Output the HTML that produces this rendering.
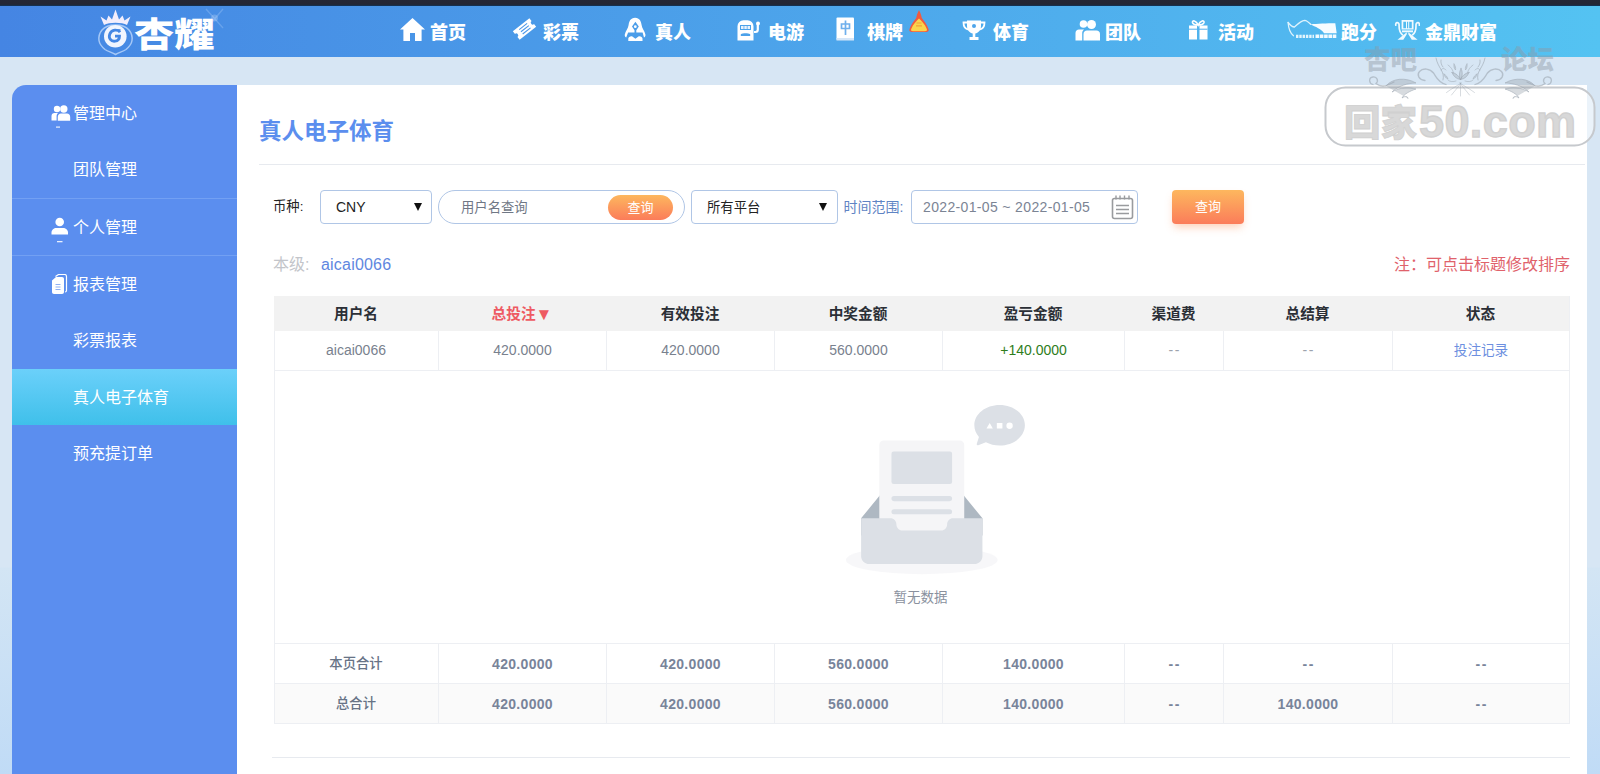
<!DOCTYPE html>
<html lang="zh-CN">
<head>
<meta charset="utf-8">
<title>真人电子体育</title>
<style>
*{box-sizing:border-box;margin:0;padding:0}
html,body{width:1600px;height:774px;overflow:hidden}
body{position:relative;background:linear-gradient(180deg,#d7e6f4 0,#d7e6f4 567px,#d3e5f4 568px,#c0dbf6 774px);font-family:"Liberation Sans","Noto Sans CJK SC",sans-serif;color:#333;font-size:14px}
.abs{position:absolute}
#topbar{left:0;top:0;width:1600px;height:6px;background:linear-gradient(180deg,#242736 0,#242634 4px,#1c2a3c 5px,#12355f 6px);z-index:5}
#header{left:0;top:5px;width:1600px;height:52px;overflow:hidden;background:linear-gradient(90deg,#4585e3 0%,#54c3f2 100%)}
.nav{position:absolute;top:2px;height:52px;line-height:52px;color:#fff;font-weight:900;font-size:18px;white-space:nowrap;letter-spacing:0}
.nav svg{position:absolute;top:0;left:0}
#logo{position:absolute;left:134px;top:10.500px;font-size:36px;line-height:40px;font-weight:900;color:#fff;letter-spacing:0;transform-origin:0 0;transform:scale(1.12,0.960)}
#side{left:12px;top:85px;width:225px;height:689px;background:#5b8eef;border-top-left-radius:14px;overflow:hidden}
.si{position:absolute;left:0;width:225px;height:56px;line-height:58px;color:#fff;font-size:16px;padding-left:61px;white-space:nowrap}
.si.act{background:linear-gradient(180deg,#6bd0fa 0%,#3fc0ea 100%)}
.sep{position:absolute;left:0;width:225px;height:1px;background:#72a0f3}
#main{left:237px;top:85px;width:1350px;height:689px;background:#fff}
#title{left:259px;top:115px;font-size:22.500px;line-height:34px;font-weight:700;color:#5b8eee;white-space:nowrap}
.hr{position:absolute;height:1px;background:#e7eaef}
.lbl{position:absolute;font-size:13.330px;line-height:20px;white-space:nowrap}
.box{position:absolute;border:1px solid #b0c6e6;background:#fff;border-radius:4px}
.btn{position:absolute;color:#fff;text-align:center;background:linear-gradient(180deg,#fdb75e 0%,#fb7c5a 100%);font-size:13px;white-space:nowrap}
.tri{width:0;height:0;border-left:4px solid transparent;border-right:4px solid transparent;border-top:8px solid #111}
#tbl{left:274px;top:296px;width:1296px;border:1px solid #e6e8ee}
.row{position:absolute;left:274px;width:1296px}
.c{position:absolute;top:0;height:100%;text-align:center;white-space:nowrap}
#tablewrap{left:274px;top:296px;width:1296px;height:428px;border-left:1px solid #edeff3;border-right:1px solid #edeff3}
.tr{position:absolute;left:-1px;width:1295px}
.th{background:#f2f2f2;font-weight:700;color:#2b2f36;font-size:14.670px}
.td{color:#79818e;box-shadow:inset 1px 0 0 #edeff3;font-size:14px;border-bottom:1px solid #edeff3}
.td .bd{border-left:1px solid #edeff3}
.td .bd:first-child{border-left:0}
.ft{color:#78849a;font-weight:700;box-shadow:inset 1px 0 0 #edeff3;font-size:14px;letter-spacing:0.300px;border-top:1px solid #edeff3}
.ft.alt{background:#fafafa;border-bottom:1px solid #edeff3}
.ft .bd{border-left:1px solid #edeff3}
.ft .bd:first-child{border-left:0}
.dd{letter-spacing:1.500px;margin-left:1.500px}
.td .dd{color:#9da3ad}
</style>
</head>
<body>
<div id="topbar" class="abs"></div>
<div id="header" class="abs">
  <svg class="abs" style="left:96px;top:3px" width="40" height="48" viewBox="0 0 40 48">
    <path d="M8 17 L4.500 8.500 L10.500 12.500 L12.500 7.500 L16 11.500 L19.500 1.500 L23 11.500 L26.500 7.500 L28.500 12.500 L34.500 8.500 L31 17 C26 14 13 14 8 17 Z" fill="#f3eefc"/>
    <path d="M19.500 17 C26 17 30.500 19 33 22 C35.500 25 36.500 28.500 36 32.500 C35.500 36 33 39 30 41.500 C27 43.500 23 44.500 19.500 46.500 C16 44.500 12 43.500 9 41.500 C6 39 3.500 36 3 32.500 C2.500 28.500 3.500 25 6 22 C8.500 19 13 17 19.500 17 Z" fill="none" stroke="#a5c8f7" stroke-width="1.500"/>
    <g transform="translate(0 -1.300)"><circle cx="19.300" cy="29.500" r="11.300" fill="#f1f5fe"/>
    <path d="M24 25.500 C22 22.500 15.500 22.500 13.700 27.500 C12.300 31.500 15 35 19 34.500 C22 34 23.500 32 23.500 29.500 H19" fill="none" stroke="#4587e4" stroke-width="2.800"/>
    <path d="M17 23.300 H24.500" stroke="#4587e4" stroke-width="1.600"/></g>
  </svg>
  <svg class="abs" style="left:200px;top:-2px" width="30" height="30" viewBox="0 0 30 30"><g stroke="#bcd8fa" stroke-opacity="0.280" stroke-width="1.400"><path d="M6 6 L23 25M23 6 L7 25"/></g><circle cx="14.500" cy="15" r="3.500" fill="#dcecff" fill-opacity="0.250"/></svg>

  <!-- nav icons : coordinates relative to header (top = y-5) -->
  <svg class="abs" style="left:400px;top:13px" width="25" height="23" viewBox="0 0 25 23"><path d="M12.5 0 L25 11.5 H21.6 V23 H15 V15 H10 V23 H3.4 V11.5 H0 Z" fill="#fff"/></svg>
  <svg class="abs" style="left:512px;top:12px" width="25" height="24" viewBox="0 0 25 24"><g transform="rotate(-38 12.5 12)"><path d="M2 6.5 H23 V10 A2 2 0 0 0 23 14 V17.5 H2 V14 A2 2 0 0 0 2 10 Z" fill="#fff"/><path d="M8 9.2H18M8 12H18M8 14.8H18" stroke="#4b97e8" stroke-width="1.1"/></g></svg>
  <svg class="abs" style="left:624px;top:12px" width="22" height="25" viewBox="0 0 22 25"><path d="M11.100 0.700 C6.500 0.700 5 4.500 4.600 8 C4.200 11.500 1.500 14 0.800 17.500 C0.600 19 1 20 2.200 20.400 L4.100 15.600 H18.600 L20 20.400 C21.200 20 21.600 19 21.400 17.500 C20.700 14 18 11.500 17.600 8 C17.200 4.500 15.700 0.700 11.100 0.700 Z M11.400 4.700 L14.800 9.500 L12.300 13.300 V15.600 H10.500 V13.300 L8 9.500 Z" fill="#fff" fill-rule="evenodd"/><circle cx="11.300" cy="9.700" r="1.400" fill="#fff"/><path d="M4.300 24 V21.500 C4.300 20 6 19 8 19.200 L11.400 21.700 L14.800 19.200 C16.800 19 18.500 20 18.500 21.500 V24 Z" fill="#fff"/></svg>
  <svg class="abs" style="left:737px;top:15px" width="24" height="21" viewBox="0 0 24 21"><path d="M6.500 0.300 H10.500 A6 6 0 0 1 16.500 6.300 V20.500 H0.500 V6.300 A6 6 0 0 1 6.500 0.300 Z M3 5 V10 H14 V5 Z M3.800 14.300 C6 13 11 13 13.200 14.300 V16 H3.800 Z" fill="#fff" fill-rule="evenodd"/><path d="M4 6H6.600V9H4ZM7.300 6H9.800V9H7.300ZM10.500 6H13V9H10.500Z" fill="#eaf3fd"/><path d="M17 12 H18.500 C20 12 20.800 11 20.800 9.500 V4" stroke="#fff" stroke-width="2.200" fill="none"/><circle cx="21" cy="3.500" r="2" fill="#fff"/></svg>
  <svg class="abs" style="left:836px;top:12px" width="19" height="24" viewBox="0 0 19 24"><rect x="0.5" y="0.5" width="17.500" height="22.500" rx="1" fill="#fff"/><rect x="0.5" y="21" width="17.500" height="2.500" fill="#d5e6f8"/><path d="M9.500 3.500V18M5.500 7H13.500V11.500H5.500Z" stroke="#6fb0ec" stroke-width="1.700" fill="none"/></svg>
  <svg class="abs" style="left:908px;top:4px" width="22" height="24" viewBox="0 0 22 24"><path d="M11 1 C12.300 3.500 13.200 6 13.800 9 C15.800 11.500 19 15.500 20.500 20 C21.200 22.200 20 23 18 23 H4 C2 23 0.800 22.200 1.500 20 C3 15.500 6.200 11.500 8.200 9 C8.800 6 9.700 3.500 11 1 Z" fill="#f25a3e"/><path d="M11 9.500 C13 11.500 17 15 18.800 20 C19.400 21.600 18.500 22.200 17 22.200 H5 C3.500 22.200 2.600 21.600 3.200 20 C5 15 9 11.500 11 9.500 Z" fill="#fbd44c"/><path d="M8.500 14h5M8 16.800h6" stroke="#f4a13a" stroke-width="1.200"/></svg>
  <svg class="abs" style="left:962px;top:15px" width="24" height="21" viewBox="0 0 24 21"><path d="M5 0.500 H19 V6 C19 10.500 16 13 13.300 13.600 V17 H16.500 V20 H7.500 V17 H10.700 V13.600 C8 13 5 10.500 5 6 Z" fill="#fff"/><path d="M5.500 2.500 H1.500 C1.500 6.500 3 9 6.500 9.500 M18.500 2.500 H22.500 C22.500 6.500 21 9 17.500 9.500" stroke="#fff" stroke-width="1.800" fill="none"/><circle cx="12" cy="6" r="2" fill="#4fa5ea"/></svg>
  <svg class="abs" style="left:1075px;top:15px" width="26" height="21" viewBox="0 0 26 21"><circle cx="8.500" cy="4" r="3.800" fill="#fff"/><path d="M0.500 20.500 V13 C0.500 11 2 9.500 4 9.500 H9 C8 10.500 7.200 11.500 7.200 13 V20.500 Z" fill="#fff"/><circle cx="16.500" cy="4.500" r="4.500" fill="#fff"/><path d="M8.500 20.500 V14 C8.500 11.800 10 10.500 12 10.500 H21.500 C23.500 10.500 25 11.800 25 14 V20.500 Z" fill="#fff"/></svg>
  <svg class="abs" style="left:1188px;top:14px" width="21" height="21" viewBox="0 0 21 21"><path d="M1 6.500 H9 V20.500 H1 Z M11.500 6.500 H19.500 V20.500 H11.500 Z" fill="#fff"/><path d="M1 10.200H19.500" stroke="#51aeee" stroke-width="1"/><path d="M10.200 6 C8 1 4 1 4.500 3.500 C5 5.500 8 6 10.200 6 C12.500 6 15.500 5.500 16 3.500 C16.500 1 12.500 1 10.200 6 Z" stroke="#fff" stroke-width="1.600" fill="none"/></svg>
  <svg class="abs" style="left:1287px;top:14px" width="52" height="21" viewBox="0 0 52 21"><g stroke="#dff3fd" stroke-width="1.300" fill="none" stroke-linecap="round"><path d="M1.100 3.500 C1.500 9 3 14 6.500 16.700"/><path d="M1.100 3.500 C3 6 5 8 7.500 8 C10 6 13 2 17.600 1.300 C20 1.500 22 3.500 23.700 5.300"/></g><path d="M23.500 5.400 C30 4.700 40 4.300 48.300 4.300 L49.700 14.300 H37 C35 10 28 7.500 23.500 5.400 Z" fill="#f6fcff"/><path d="M9 17.400 H27" stroke="#e3f5fd" stroke-width="3.200" stroke-dasharray="2.400 0.900"/><path d="M28.500 17.300 H49.800" stroke="#f2fbff" stroke-width="3.600" stroke-dasharray="3.600 0.700"/></svg>
  <svg class="abs" style="left:1394px;top:14px" width="26" height="22" viewBox="0 0 26 22"><path d="M7.600 1.100 H19.500 V10.600 H7.600 Z M9.300 2.700 V9.200 H12 V2.700 Z M13 2.700 V9.200 H14.200 V2.700 Z M15.200 2.700 V9.200 H17.800 V2.700 Z" fill="#f0faff" fill-rule="evenodd"/><path d="M8 11.400 H19 V13.300 H8 Z" fill="#f0faff"/><g stroke="#f0faff" stroke-width="1.700" fill="none" stroke-linecap="round"><path d="M1.800 6.200 C1 3 5 2.600 5.100 5.800 C5.200 9.500 4.500 12.500 8.500 15.800"/><path d="M25.300 6.200 C26.100 3 22.100 2.600 22 5.800 C21.900 9.500 22.600 12.500 18.600 15.800"/></g><path d="M12.800 13.300 L3.500 20.800 H9.300 L12.800 15.300 Z M14.300 13.300 L23.600 20.800 H17.800 L14.300 15.300 Z" fill="#f0faff"/></svg>
  <div id="logo">杏耀</div>
  <div class="nav" style="left:430px">首页</div>
  <div class="nav" style="left:543px">彩票</div>
  <div class="nav" style="left:655px">真人</div>
  <div class="nav" style="left:768px">电游</div>
  <div class="nav" style="left:867px">棋牌</div>
  <div class="nav" style="left:993px">体育</div>
  <div class="nav" style="left:1105px">团队</div>
  <div class="nav" style="left:1218px">活动</div>
  <div class="nav" style="left:1341px">跑分</div>
  <div class="nav" style="left:1425px">金鼎财富</div>
</div>
<div id="side" class="abs">
  <svg class="abs" style="left:39px;top:20px" width="20" height="24" viewBox="0 0 20 24"><circle cx="6" cy="4" r="3.200" fill="#fff"/><path d="M0.500 15.500 V11 C0.500 9.300 1.800 8 3.500 8 H7 C6 9 5.600 10 5.600 11.500 V15.500 Z" fill="#fff"/><circle cx="12.800" cy="4" r="3.700" fill="#fff"/><path d="M6.800 15.800 V12 C6.800 10 8.200 8.600 10 8.600 H16 C17.800 8.600 19.200 10 19.200 12 V15.800 Z" fill="#fff"/><rect x="5" y="21.500" width="4" height="1.200" fill="#e8effd"/></svg>
  <svg class="abs" style="left:39px;top:132px" width="18" height="26" viewBox="0 0 18 26"><circle cx="8.700" cy="5" r="4.300" fill="#fff"/><path d="M0.500 17.500 V15.500 C0.500 12.800 2.800 11 5.500 11 H12 C14.700 11 17 12.800 17 15.500 V17.500 Z" fill="#fff"/><rect x="6" y="24" width="5.500" height="1.300" fill="#e8effd"/></svg>
  <svg class="abs" style="left:39px;top:189px" width="17" height="21" viewBox="0 0 17 21"><path d="M4.500 2.500 L7.500 0.500 H13.500 C14.800 0.500 15.500 1.200 15.500 2.500 V16.500 C15.500 17.500 15 18 14 18" stroke="#fff" stroke-width="1.200" fill="none"/><path d="M1 6.500 L5 3 H11 C12.200 3 13 3.800 13 5 V18 C13 19.200 12.200 20 11 20 H3 C1.800 20 1 19.200 1 18 Z" fill="#fff"/><path d="M4.500 10.500H9.500M4.500 13H9.500M4.500 15.500H9.500" stroke="#8fb0f4" stroke-width="1"/></svg>
  <div class="si" style="top:0">管理中心</div>
  <div class="si" style="top:56px">团队管理</div>
  <div class="sep" style="top:113px"></div>
  <div class="si" style="top:114px">个人管理</div>
  <div class="sep" style="top:170px"></div>
  <div class="si" style="top:171px">报表管理</div>
  <div class="si" style="top:227px">彩票报表</div>
  <div class="si act" style="top:284px">真人电子体育</div>
  <div class="si" style="top:340px">预充提订单</div>
</div>
<div id="main" class="abs"></div>
<div id="title" class="abs">真人电子体育</div>
<div class="hr" style="left:259px;top:164px;width:1326px"></div>

<!-- filter row -->
<div class="lbl" style="left:273px;top:197px;color:#222">币种:</div>
<div class="box" style="left:320px;top:190px;width:112px;height:34px">
  <span class="abs" style="left:15px;top:6px;font-size:14px;line-height:20px;color:#222">CNY</span>
  <span class="abs tri" style="left:93px;top:12px"></span>
</div>
<div class="box" style="left:438px;top:190px;width:247px;height:34px;border-radius:17px">
  <span class="abs" style="left:22px;top:7px;font-size:13.330px;line-height:20px;color:#6f7785">用户名查询</span>
  <div class="btn" style="left:169px;top:4px;width:65px;height:25px;line-height:25px;border-radius:13px">查询</div>
</div>
<div class="box" style="left:691px;top:190px;width:147px;height:34px">
  <span class="abs" style="left:15px;top:7px;font-size:13.330px;line-height:20px;color:#222">所有平台</span>
  <span class="abs tri" style="left:127px;top:12px"></span>
</div>
<div class="lbl" style="left:843.500px;top:197px;font-size:14px;color:#5f84c4">时间范围:</div>
<div class="box" style="left:911px;top:190px;width:227px;height:34px">
  <span class="abs" style="left:11px;top:6px;font-size:14px;letter-spacing:0.350px;line-height:20px;color:#7b8494">2022-01-05 ~ 2022-01-05</span>
  <svg class="abs" style="left:199px;top:2px" width="24" height="28" viewBox="0 0 24 28">
    <rect x="1.5" y="5.5" width="20" height="20" rx="2" fill="#fff" stroke="#999b9e" stroke-width="1.6"/>
    <g stroke="#999b9e" stroke-width="1.6"><path d="M5 12.5h13M5 16.5h13M5 20.5h13"/></g>
    <g stroke="#999b9e" stroke-width="1.4"><path d="M5 2.5v4M9 2.5v4M13.5 2.5v4M18 2.5v4"/></g>
  </svg>
</div>
<div class="btn" style="left:1172px;top:190px;width:72px;height:34px;line-height:34px;border-radius:4px;box-shadow:0 5px 8px -2px rgba(250,140,80,.420)">查询</div>

<div class="lbl" style="left:273px;top:254px;font-size:16px;line-height:22px;color:#c3c5ca">本级:</div>
<div class="lbl" style="left:321px;top:254px;font-size:16px;letter-spacing:0.200px;line-height:22px;color:#5f87e0">aicai0066</div>
<div class="lbl" style="right:30px;top:254px;font-size:16px;line-height:22px;color:#e0626b">注：可点击标题修改排序</div>

<!-- table -->
<div id="tablewrap" class="abs">
  <div class="tr th" style="top:0;height:35px;line-height:36px">
    <div class="c " style="left:0px;width:164px">用户名</div>
    <div class="c " style="left:164px;width:168px;color:#ee5a62">总投注<span style="font-size:17px;line-height:1;position:relative;top:1px">▼</span></div>
    <div class="c " style="left:332px;width:168px">有效投注</div>
    <div class="c " style="left:500px;width:168px">中奖金额</div>
    <div class="c " style="left:668px;width:182px">盈亏金额</div>
    <div class="c " style="left:850px;width:99px">渠道费</div>
    <div class="c " style="left:949px;width:169px">总结算</div>
    <div class="c " style="left:1118px;width:177px">状态</div>
  </div>
  <div class="tr td" style="top:35px;height:40px;line-height:39.500px">
    <div class="c bd" style="left:0px;width:164px">aicai0066</div>
    <div class="c bd" style="left:164px;width:168px">420.0000</div>
    <div class="c bd" style="left:332px;width:168px">420.0000</div>
    <div class="c bd" style="left:500px;width:168px">560.0000</div>
    <div class="c bd" style="left:668px;width:182px;color:#2f7d1c">+140.0000</div>
    <div class="c bd" style="left:850px;width:99px"><span class="dd">--</span></div>
    <div class="c bd" style="left:949px;width:169px"><span class="dd">--</span></div>
    <div class="c bd" style="left:1118px;width:177px;color:#6d8fe0;font-size:13.600px">投注记录</div>
  </div>
  <div class="tr ft" style="top:347px;height:40px;line-height:40.500px">
    <div class="c bd" style="left:0px;width:164px;font-size:13.330px;letter-spacing:0;font-weight:500;color:#677386">本页合计</div>
    <div class="c bd" style="left:164px;width:168px">420.0000</div>
    <div class="c bd" style="left:332px;width:168px">420.0000</div>
    <div class="c bd" style="left:500px;width:168px">560.0000</div>
    <div class="c bd" style="left:668px;width:182px">140.0000</div>
    <div class="c bd" style="left:850px;width:99px"><span class="dd">--</span></div>
    <div class="c bd" style="left:949px;width:169px"><span class="dd">--</span></div>
    <div class="c bd" style="left:1118px;width:177px"><span class="dd">--</span></div>
  </div>
  <div class="tr ft alt" style="top:387px;height:41px;line-height:40.500px">
    <div class="c bd" style="left:0px;width:164px;font-size:13.330px;letter-spacing:0;font-weight:500;color:#677386">总合计</div>
    <div class="c bd" style="left:164px;width:168px">420.0000</div>
    <div class="c bd" style="left:332px;width:168px">420.0000</div>
    <div class="c bd" style="left:500px;width:168px">560.0000</div>
    <div class="c bd" style="left:668px;width:182px">140.0000</div>
    <div class="c bd" style="left:850px;width:99px"><span class="dd">--</span></div>
    <div class="c bd" style="left:949px;width:169px">140.0000</div>
    <div class="c bd" style="left:1118px;width:177px"><span class="dd">--</span></div>
  </div>
  <div id="empty"><svg class="abs" style="left:543.500px;top:109px" width="206" height="170" viewBox="0 0 184 152"><g fill="none" fill-rule="evenodd"><g transform="translate(24 31.670)"><ellipse fill-opacity=".8" fill="#F5F5F7" cx="67.797" cy="106.890" rx="67.797" ry="12.668"/><path d="M122.034 69.674L98.109 40.229c-1.148-1.386-2.826-2.225-4.593-2.225h-51.440c-1.766 0-3.444.839-4.592 2.225L13.560 69.674v15.383h108.475V69.674z" fill="#AEB8C2"/><path d="M33.830 0h67.933a4 4 0 0 1 4 4v93.344a4 4 0 0 1-4 4H33.830a4 4 0 0 1-4-4V4a4 4 0 0 1 4-4z" fill="#F5F5F7"/><path d="M42.678 9.953h50.237a2 2 0 0 1 2 2V36.910a2 2 0 0 1-2 2H42.678a2 2 0 0 1-2-2V11.953a2 2 0 0 1 2-2zM42.940 49.767h49.713a2.262 2.262 0 1 1 0 4.524H42.940a2.262 2.262 0 0 1 0-4.524zM42.940 61.530h49.713a2.262 2.262 0 1 1 0 4.525H42.940a2.262 2.262 0 0 1 0-4.525zM121.813 105.032c-.775 3.071-3.497 5.360-6.735 5.360H20.515c-3.238 0-5.960-2.290-6.734-5.360a7.309 7.309 0 0 1-.222-1.790V69.675h26.318c2.907 0 5.250 2.448 5.250 5.420v.040c0 2.971 2.370 5.370 5.277 5.370h34.785c2.907 0 5.277-2.421 5.277-5.393V75.100c0-2.972 2.343-5.426 5.250-5.426h26.318v33.569c0 .617-.077 1.216-.221 1.789z" fill="#DCE0E6"/></g><path d="M149.121 33.292l-6.830 2.650a1 1 0 0 1-1.317-1.230l1.937-6.207c-2.589-2.944-4.109-6.534-4.109-10.408C138.802 8.102 148.920 0 161.402 0 173.881 0 184 8.102 184 18.097c0 9.995-10.118 18.097-22.599 18.097-4.528 0-8.744-1.066-12.280-2.902z" fill="#DCE0E6"/><g transform="translate(149.650 15.383)" fill="#FFF"><ellipse cx="20.654" cy="3.167" rx="2.849" ry="2.815"/><path d="M5.698 5.630H0L2.898.704zM9.259.704h4.985V5.630H9.259z"/></g></g></svg>
  <div class="abs" style="left:-2px;top:291.500px;width:1295px;text-align:center;font-size:13.500px;line-height:20px;color:#8a919e">暂无数据</div></div>
</div>
<div class="hr" style="left:272px;top:757px;width:1298px"></div>
<svg id="wm" class="abs" style="left:1320px;top:40px" width="280" height="112" viewBox="0 0 280 112">
  <rect x="5.500" y="47.500" width="269" height="58" rx="20" ry="20" fill="rgba(255,255,255,0.500)" stroke="#c6c9cd" stroke-width="2"/>
  <g fill="#8f99a4" fill-opacity="0.450" font-family="Liberation Sans, Noto Sans CJK SC, sans-serif" font-weight="900">
    <text x="44" y="29.300" font-size="26.500">杏吧</text>
    <text x="181" y="29.300" font-size="26.500">论坛</text>
  </g>
  <g fill="none" stroke="#9ca6b0" stroke-opacity="0.600" stroke-width="1.300" stroke-linecap="round">
    <g id="flL">
      <path d="M53 44.500 C48.500 43 48.500 37.500 53 37 C57 36.500 59 41 56 43.500 C62 48.500 68 45 74 42"/>
      <path d="M66 46 C72 38 86 37 96 43 C88 43 78 46 72 52 C80 47 90 47 96 49 C90 51 84 54 82 58 C85 56 88 56 88 58.500" fill="#9ca6b0" fill-opacity="0.400" stroke-width="0.900"/>
      <path d="M105 40.500 C99 40 96.500 35 99.500 31.500 C103 27.500 110 28.500 113.500 33 C116.500 37 117.500 42 126 44.500"/>
      <path d="M116 18 C117 23 119 26 121 29.500 C123 33 124 36 123 40 M121 20 C120.500 23 121.500 25 123 27" stroke-width="1"/>
      <path d="M132 32.500 C136 33 139 36 140.500 39.500 C136.500 39 133.500 36.500 132 32.500 Z" fill="#9ca6b0" fill-opacity="0.350" stroke-width="0.900"/>
      <path d="M141 43 C137 46 131 49 126.500 52.500 M141 43 C138.500 47 134.500 51 131.500 55" stroke-width="0.900" stroke-opacity="0.450"/>
    </g>
    <use href="#flL" transform="translate(281 0) scale(-1 1)"/>
    <path d="M141 28.500 C139 32 139 36 140.500 40 C142.500 36 143 32 141 28.500 Z" fill="#9ca6b0" fill-opacity="0.350" stroke-width="0.900"/>
    <path d="M140.500 43 V56" stroke-width="0.900" stroke-opacity="0.450"/>
    <path d="M128 25 C131 27 133 30 133.500 33 M153 25 C150 27 148 30 147.500 33 M126 30 C124 28 122 28 121 30 M155 30 C157 28 159 28 160 30 M136 41 C133 42 130 42 128 40 M145 41 C148 42 151 42 153 40" stroke-width="1" stroke-opacity="0.500"/>
    <path d="M134 24 C135.500 26 136 28 135.500 30 C134 28.500 133.500 26 134 24 Z M147 24 C145.500 26 145 28 145.500 30 C147 28.500 147.500 26 147 24 Z M124 34 C126 35 127.500 37 128 39 C125.500 38 124.500 36.500 124 34 Z M157 34 C155 35 153.500 37 153 39 C155.500 38 156.500 36.500 157 34 Z" fill="#9ca6b0" fill-opacity="0.350" stroke-width="0.700"/>
  </g>
  <g fill="#d8d8d8" stroke="#d0d0d0" stroke-width="0.800" font-family="Liberation Sans, Noto Sans CJK SC, sans-serif" font-weight="900">
    <text x="24" y="95.500" font-size="36.500">回家</text>
    <text x="99" y="97" font-size="45" font-weight="700" stroke-width="1.400" letter-spacing="0.400">50.com</text>
  </g>
</svg>
</body>
</html>
